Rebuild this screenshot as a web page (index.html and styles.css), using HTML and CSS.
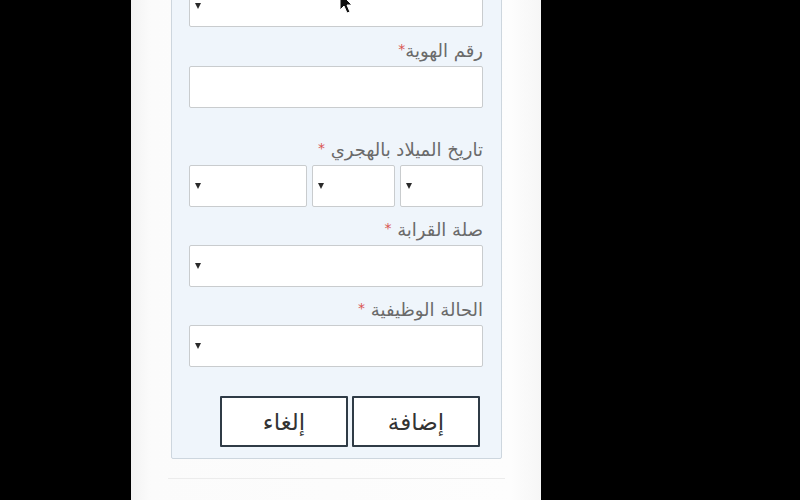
FILE: index.html
```html
<!DOCTYPE html>
<html lang="ar">
<head>
<meta charset="utf-8">
<title>نموذج إضافة تابع</title>
<link rel="stylesheet" href="styles.css">
</head>
<body>
<div class="panel" dir="rtl">
  <form class="box">
    <div class="select first"><span class="caret"></span></div>

    <label class="lbl">رقم الهوية<span class="req">*</span></label>
    <div class="input"></div>

    <label class="lbl lbl-date">تاريخ الميلاد بالهجري <span class="req">*</span></label>
    <div class="date-row">
      <div class="select day"><span class="caret"></span></div>
      <div class="select month"><span class="caret"></span></div>
      <div class="select year"><span class="caret"></span></div>
    </div>

    <label class="lbl">صلة القرابة <span class="req">*</span></label>
    <div class="select"><span class="caret"></span></div>

    <label class="lbl">الحالة الوظيفية <span class="req">*</span></label>
    <div class="select"><span class="caret"></span></div>

    <div class="actions">
      <button type="button" class="btn">إضافة</button>
      <button type="button" class="btn">إلغاء</button>
    </div>
  </form>
  <div class="sep"></div>
</div>
<svg class="cursor" width="16" height="24" viewBox="0 0 16 24">
  <path d="M1 1 L1 18 L5 14 L8 21 L11 20 L8 13 L13 13 Z" fill="#111" stroke="#fff" stroke-width="1"/>
</svg>
</body>
</html>
```
FILE: styles.css
```css
html, body {
  margin: 0;
  padding: 0;
}
body {
  background: #000;
  width: 800px;
  height: 500px;
  overflow: hidden;
  position: relative;
  font-family: "DejaVu Sans", "Noto Sans", sans-serif;
}
.panel {
  margin-left: 131px;
  width: 410px;
  height: 500px;
  box-sizing: border-box;
  padding: 0 39px 0 40px;
  background: linear-gradient(to right, #f3f3f3 0, #fbfbfb 20px, #fdfdfd 380px, #f6f6f6 410px);
  display: flex;
  flex-direction: column;
}
.box {
  margin-top: -33px;
  box-sizing: border-box;
  border: 1px solid #cdd6de;
  border-radius: 2px;
  background: #eff5fb;
  padding: 17px 18px 11px 17px;
  display: flex;
  flex-direction: column;
}
.select, .input {
  height: 42px;
  box-sizing: border-box;
  border: 1px solid #c9ccce;
  border-radius: 2px;
  background: #fff;
  position: relative;
  display: flex;
  align-items: center;
  justify-content: flex-end;
  padding-left: 5px;
}
.caret {
  width: 0;
  height: 0;
  border-left: 3.5px solid transparent;
  border-right: 3.5px solid transparent;
  border-top: 6px solid #2a2a2a;
}
.lbl {
  display: block;
  margin: 6px 0 6px;
  height: 26px;
  line-height: 31px;
  font-size: 18px;
  color: #6a6a6a;
  text-align: right;
  white-space: nowrap;
}
.first + .lbl {
  margin-top: 7px;
}
.lbl-date {
  margin-top: 25px;
}
.req {
  color: #d9534f;
  font-size: 14px;
  vertical-align: 3px;
}
.date-row {
  display: flex;
  gap: 5px;
}
.date-row .day,
.date-row .month {
  width: 83px;
}
.date-row .year {
  flex: 1;
}
.actions {
  margin-top: 29px;
  padding-right: 3px;
  display: flex;
  gap: 4px;
}
.btn {
  width: 128px;
  height: 51px;
  box-sizing: border-box;
  border: 2px solid #2f3b46;
  border-radius: 1px;
  background: #fff;
  color: #333;
  font-family: "DejaVu Sans", "Noto Sans", sans-serif;
  font-size: 23px;
  padding: 0;
}
.sep {
  margin: 19px -3px 0 -3px;
  height: 1px;
  background: #ececec;
}
.cursor {
  position: absolute;
  left: 339px;
  top: -8px;
}
```
